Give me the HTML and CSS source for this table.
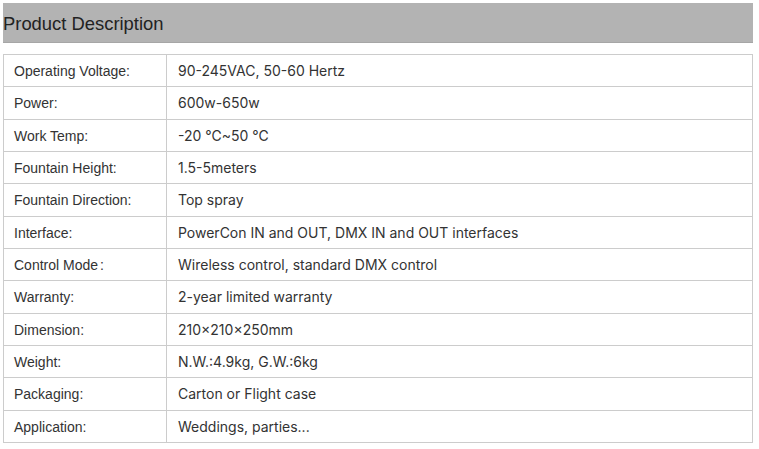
FILE: index.html
```html
<!DOCTYPE html>
<html>
<head>
<meta charset="utf-8">
<link rel="stylesheet" href="styles.css">
</head>
<body>
<div class="page">
  <h2 class="title">Product Description</h2>
  <table class="spec">
    <tr><td class="k">Operating Voltage:</td><td class="v">90-245VAC, 50-60 Hertz</td></tr>
    <tr><td class="k">Power:</td><td class="v">600w-650w</td></tr>
    <tr><td class="k">Work Temp:</td><td class="v">-20 ℃~50 ℃</td></tr>
    <tr><td class="k">Fountain Height:</td><td class="v">1.5-5meters</td></tr>
    <tr><td class="k">Fountain Direction:</td><td class="v">Top spray</td></tr>
    <tr><td class="k">Interface:</td><td class="v">PowerCon IN and OUT, DMX IN and OUT interfaces</td></tr>
    <tr><td class="k">Control Mode<span class="colon">:</span></td><td class="v">Wireless control, standard DMX control</td></tr>
    <tr><td class="k">Warranty:</td><td class="v">2-year limited warranty</td></tr>
    <tr><td class="k">Dimension:</td><td class="v">210×210×250mm</td></tr>
    <tr><td class="k">Weight:</td><td class="v">N.W.:4.9kg, G.W.:6kg</td></tr>
    <tr><td class="k">Packaging:</td><td class="v">Carton or Flight case</td></tr>
    <tr><td class="k">Application:</td><td class="v">Weddings, parties...</td></tr>
  </table>
</div>
</body>
</html>
```
FILE: styles.css
```css
html, body { margin: 0; padding: 0; background: #fff; }
.page { padding: 3px 6px 0 3px; }
.title {
  margin: 0;
  height: 39px;
  background: #b3b3b3;
  border-bottom: 1px solid #a6a6a6;
  font-family: "Liberation Sans", Arial, sans-serif;
  font-weight: normal;
  font-size: 18.4px;
  line-height: 41px;
  color: #222;
  padding: 0;
}
.spec {
  margin-top: 11px;
  width: 750px;
  border-collapse: collapse;
  font-size: 14px;
  color: #333;
}
.spec td {
  border: 1px solid #cccccc;
  height: 30.33px;
  padding: 1px 10px 0;
  vertical-align: middle;
  line-height: 20px;
  box-sizing: content-box;
}
.spec .k {
  width: 142px;
  font-family: "Liberation Sans", Arial, sans-serif;
}
.spec .v {
  font-family: Inter, "Liberation Sans", sans-serif;
  padding-left: 11px;
}
.colon { margin-left: 2px; }
```
